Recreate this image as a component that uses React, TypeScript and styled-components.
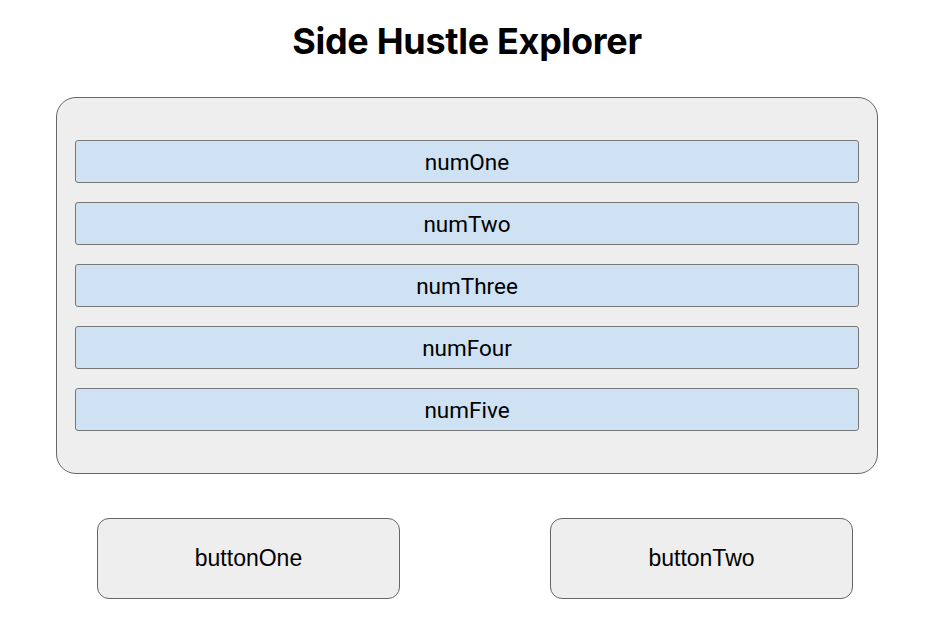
import React from "react";
import styled, { createGlobalStyle } from "styled-components";

const Global = createGlobalStyle`
  html, body { margin: 0; padding: 0; background: #ffffff; }
  body { font-family: "Liberation Sans", Arial, sans-serif; color: #000; }
`;

const Page = styled.div`
  width: 822px;
  margin-left: 56px;
  padding-top: 19px;
  display: flex;
  flex-direction: column;
`;

const Title = styled.h1`
  margin: 0;
  height: 44px;
  line-height: 44px;
  text-align: center;
  font-family: Inter, "Liberation Sans", sans-serif;
  font-weight: 700;
  font-size: 36px;
  letter-spacing: -0.3px;
  color: #000;
`;

const Panel = styled.div`
  margin-top: 34px;
  box-sizing: border-box;
  height: 377px;
  background: #eeeeee;
  border: 1px solid #666666;
  border-radius: 20px;
  padding: 42px 18px 0 18px;
  display: flex;
  flex-direction: column;
  gap: 19px;
`;

const Row = styled.div`
  box-sizing: border-box;
  height: 43px;
  background: #cfe2f3;
  border: 1px solid #777777;
  border-radius: 3px;
  display: flex;
  align-items: center;
  justify-content: center;
  font-family: Roboto, "Liberation Sans", sans-serif;
  font-size: 22.5px;
  color: #000;
`;

const Buttons = styled.div`
  margin-top: 44px;
  padding-left: 41px;
  display: flex;
  gap: 150px;
`;

const Button = styled.div`
  box-sizing: border-box;
  width: 303px;
  height: 81px;
  background: #eeeeee;
  border: 1px solid #666666;
  border-radius: 12px;
  display: flex;
  align-items: center;
  justify-content: center;
  font-family: "Liberation Sans", Arial, sans-serif;
  font-size: 23px;
  color: #000;
`;

const rows = ["numOne", "numTwo", "numThree", "numFour", "numFive"];

export default function App() {
  return (
    <>
      <Global />
      <Page>
        <Title>Side Hustle Explorer</Title>
        <Panel>
          {rows.map((r) => (
            <Row key={r}>{r}</Row>
          ))}
        </Panel>
        <Buttons>
          <Button>buttonOne</Button>
          <Button>buttonTwo</Button>
        </Buttons>
      </Page>
    </>
  );
}
